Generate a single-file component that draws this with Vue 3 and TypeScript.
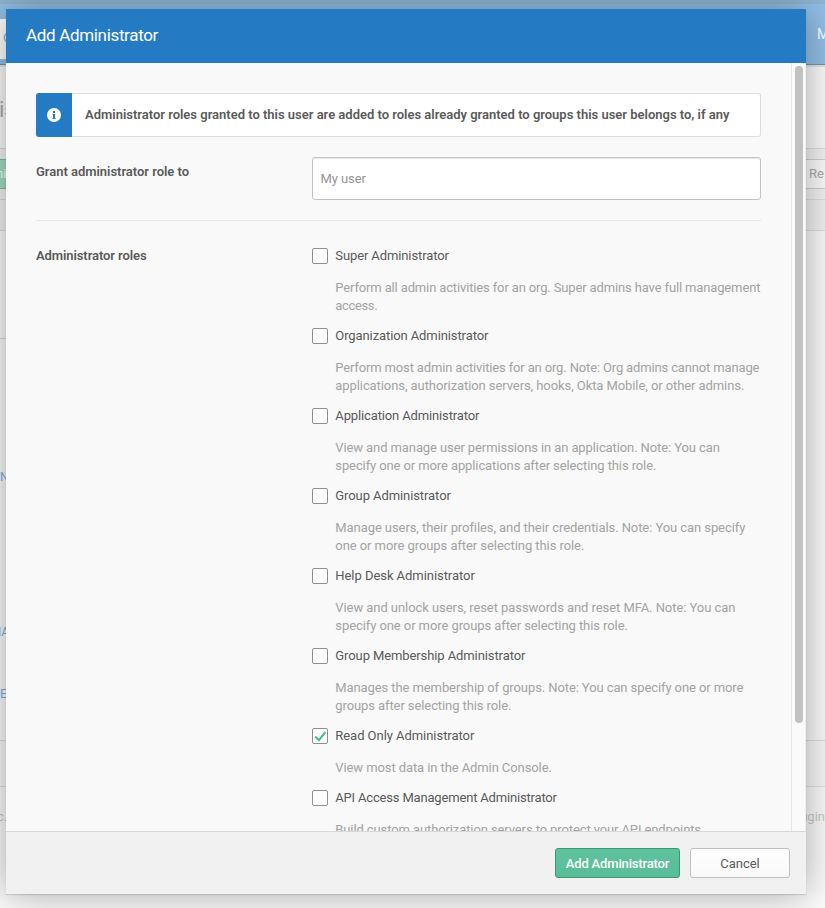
<script setup lang="ts">
interface Line {
  text: string
  width: number
}
interface Role {
  name: Line
  description: Line[]
  checked?: boolean
}

const line = (text: string, width: number): Line => ({ text, width })

const roles: Role[] = [
  {
    name: line('Super Administrator', 113.5),
    description: [
      line('Perform all admin activities for an org. Super admins have full management', 425),
      line('access.', 42),
    ],
  },
  {
    name: line('Organization Administrator', 153),
    description: [
      line('Perform most admin activities for an org. Note: Org admins cannot manage', 424),
      line('applications, authorization servers, hooks, Okta Mobile, or other admins.', 409),
    ],
  },
  {
    name: line('Application Administrator', 144),
    description: [
      line('View and manage user permissions in an application. Note: You can', 384.5),
      line('specify one or more applications after selecting this role.', 321),
    ],
  },
  {
    name: line('Group Administrator', 115.5),
    description: [
      line('Manage users, their profiles, and their credentials. Note: You can specify', 409.5),
      line('one or more groups after selecting this role.', 249),
    ],
  },
  {
    name: line('Help Desk Administrator', 139.5),
    description: [
      line('View and unlock users, reset passwords and reset MFA. Note: You can', 400),
      line('specify one or more groups after selecting this role.', 292.5),
    ],
  },
  {
    name: line('Group Membership Administrator', 190),
    description: [
      line('Manages the membership of groups. Note: You can specify one or more', 408),
      line('groups after selecting this role.', 176),
    ],
  },
  {
    name: line('Read Only Administrator', 139),
    description: [line('View most data in the Admin Console.', 216.5)],
    checked: true,
  },
  {
    name: line('API Access Management Administrator', 221.5),
    description: [line('Build custom authorization servers to protect your API endpoints.', 369)],
  },
]

// Tracks a single line of text so that it spans the given width.
const vFit = {
  mounted(el: HTMLElement, binding: { value: number }) {
    const count = (el.textContent ?? '').length
    const natural = el.getBoundingClientRect().width
    el.style.letterSpacing = `${((binding.value - natural) / count).toFixed(4)}px`
  },
}
</script>

<template>
  <div class="screen">
    <div class="page">
      <div class="page-strip"></div>
      <div class="page-nav">
        <div class="nav-tab">O</div>
        <div class="nav-user">M</div>
      </div>
      <div class="page-title"><span>is</span></div>
      <div class="page-tools">
        <span class="tool-add">ni</span>
        <span class="tool-report">Re</span>
      </div>
      <div class="page-thead"></div>
      <div class="page-table">
        <div class="table-rule"></div>
        <span class="link link-n">N</span>
        <span class="link link-a">IA</span>
        <span class="link link-e">E</span>
      </div>
      <div class="page-gap"></div>
      <div class="page-foot"><span class="foot-left">c.</span><span>ugin</span></div>
    </div>

    <section class="modal">
      <header class="modal-head"><span v-fit="132">Add Administrator</span></header>
      <div class="modal-body">
        <div class="content">
          <div class="banner">
            <div class="banner-icon">
              <svg width="14" height="14" viewBox="0 0 14 14">
                <circle cx="7" cy="7" r="7" fill="#fff" />
                <path d="M6 3h2v2H6zM5.5 6H8v4h.6v1H5.5v-1H6V7h-.5z" fill="#257bc3" />
              </svg>
            </div>
            <div class="banner-text">
              <span v-fit="644.5">Administrator roles granted to this user are added to roles already granted to groups this user belongs to, if any</span>
            </div>
          </div>
          <div class="row row-user">
            <div class="label"><span v-fit="153">Grant administrator role to</span></div>
            <div class="input"><span v-fit="45.5">My user</span></div>
          </div>
          <div class="row row-roles">
            <div class="label"><span v-fit="110.5">Administrator roles</span></div>
            <div class="roles">
              <div v-for="role in roles" :key="role.name.text" class="role">
                <div class="role-head">
                  <span class="box">
                    <svg v-if="role.checked" width="14" height="14" viewBox="0 0 14 14">
                      <path d="M2.2 7.6L5.9 11.2L12.3 3.2" fill="none" stroke="#4cb892" stroke-width="2.1" />
                    </svg>
                  </span>
                  <span v-fit="role.name.width">{{ role.name.text }}</span>
                </div>
                <div class="role-desc">
                  <div v-for="l in role.description" :key="l.text">
                    <span v-fit="l.width">{{ l.text }}</span>
                  </div>
                </div>
              </div>
            </div>
          </div>
        </div>
        <div class="scroll-track"><div class="scroll-thumb"></div></div>
      </div>
      <footer class="modal-foot">
        <button class="btn primary"><span v-fit="103.5">Add Administrator</span></button>
        <button class="btn"><span v-fit="39.5">Cancel</span></button>
      </footer>
    </section>
  </div>
</template>

<style>
body {
  overflow: hidden;
}
</style>

<style scoped>
* {
  box-sizing: border-box;
}
span {
  white-space: nowrap;
}
.screen {
  position: relative;
  width: 825px;
  height: 908px;
  overflow: hidden;
  background: #fbfbfb;
  font-family: Roboto, "Liberation Sans", sans-serif;
  font-size: 13px;
  color: #5a5a5a;
}
.page {
  display: flex;
  flex-direction: column;
  height: 908px;
}
.page-strip {
  height: 4px;
  background: #8fb5d0;
}
.page-nav {
  display: flex;
  justify-content: space-between;
  align-items: flex-start;
  height: 61px;
  padding-top: 15px;
  background: #92bfe7;
  border-bottom: 1px solid #7295b4;
}
.nav-tab {
  width: 60px;
  height: 40px;
  padding-left: 3px;
  background: #fff;
  color: #7fb0d8;
  line-height: 38px;
}
.nav-user {
  width: 8px;
  color: #fff;
  font-size: 14px;
  line-height: 30px;
}
.page-title {
  height: 84px;
  padding-top: 27px;
  background: #fafafa;
  border-top: 2px solid #e4e4e4;
  border-bottom: 1px solid #dedede;
  color: #aaa;
  font-size: 22px;
  line-height: 32px;
}
.page-title span {
  margin-left: -1px;
}
.page-tools {
  display: flex;
  justify-content: space-between;
  height: 51px;
  padding-top: 10px;
  background: #f3f3f3;
  border-bottom: 1px solid #dedede;
}
.tool-add {
  width: 40px;
  height: 30px;
  margin-left: -5px;
  border: 1px solid #83b7a2;
  background: #a3dcc5;
  color: #fff;
  line-height: 28px;
}
.tool-report {
  width: 40px;
  height: 30px;
  margin-right: -12px;
  padding-left: 11px;
  border: 1px solid #d0d0d0;
  background: #fcfcfc;
  color: #aaa;
  line-height: 28px;
}
.page-thead {
  height: 31px;
  background: #f1f1f1;
  border-bottom: 1px solid #dedede;
}
.page-table {
  position: relative;
  height: 510px;
  background: #fafafa;
  border-bottom: 1px solid #dcdcdc;
}
.table-rule {
  width: 100px;
  height: 108px;
  border-bottom: 1px solid #dadada;
}
.link {
  position: absolute;
  color: #79aedb;
  font-size: 12px;
  line-height: 14px;
}
.link-n {
  top: 239px;
  left: 0;
}
.link-a {
  top: 394px;
  left: -2px;
}
.link-e {
  top: 456px;
  left: 0;
}
.page-gap {
  height: 46px;
  background: #f8f8f8;
  border-bottom: 1px solid #e0e0e0;
}
.page-foot {
  display: flex;
  justify-content: space-between;
  padding-top: 22px;
  line-height: 16px;
  color: #c9c9c9;
}
.foot-left {
  margin-left: -3px;
}
.modal {
  position: absolute;
  top: 9px;
  left: 6px;
  display: flex;
  flex-direction: column;
  width: 800px;
  height: 885px;
  background: #f9f9f9;
  box-shadow: 0 0 36px rgba(0, 0, 0, 0.34), 0 1px 1px rgba(0, 0, 0, 0.12);
}
.modal-head {
  flex: none;
  height: 54px;
  padding-left: 20px;
  background: #257bc3;
  color: #fff;
  font-size: 17px;
  line-height: 53px;
}
.modal-body {
  display: flex;
  justify-content: space-between;
  height: 768px;
  overflow: hidden;
}
.content {
  width: 725px;
  margin-left: 30px;
  padding-top: 30px;
}
.banner {
  display: flex;
  height: 44px;
  border: 1px solid #ddd;
  border-left: 0;
  border-radius: 3px;
  background: #fff;
}
.banner-icon {
  display: flex;
  align-items: center;
  justify-content: center;
  width: 36px;
  height: 44px;
  margin-top: -1px;
  border-radius: 3px 0 0 3px;
  background: #257bc3;
}
.banner-text {
  padding-left: 13px;
  font-weight: 600;
  line-height: 42px;
}
.row {
  display: flex;
  justify-content: space-between;
}
.row-user {
  height: 84px;
  padding-top: 20px;
  border-bottom: 1px solid #e6e6e6;
}
.label {
  font-weight: 600;
  line-height: 30px;
}
.input {
  width: 449px;
  height: 43px;
  padding-left: 7.4px;
  border: 1px solid #c2c2c2;
  border-radius: 3px;
  background: #fff;
  box-shadow: inset 0 1px 1px #e8e8e8;
  color: #949494;
  line-height: 42px;
}
.row-roles {
  padding-top: 26px;
}
.row-roles .label {
  line-height: 18px;
}
.roles {
  width: 449px;
}
.role {
  margin-bottom: 12px;
}
.role-head {
  display: flex;
  gap: 7.3px;
  height: 18px;
  line-height: 18px;
}
.box {
  width: 16px;
  height: 16px;
  margin-top: 1px;
  border: 1px solid #8f8f8f;
  border-radius: 2px;
  background: #fff;
}
.box svg {
  display: block;
}
.role-desc {
  padding: 14px 0 0 23.3px;
  color: #a3a3a3;
  line-height: 18px;
}
.scroll-track {
  width: 15px;
  padding: 3px 0 0 3px;
  border-left: 1px solid #e6e6e6;
  border-right: 1px solid #eee;
  background: #fafafa;
}
.scroll-thumb {
  width: 8px;
  height: 657px;
  border-radius: 4px;
  background: #c1c1c1;
}
.modal-foot {
  display: flex;
  justify-content: flex-end;
  gap: 10px;
  height: 63px;
  padding: 16px 16px 0 0;
  border-top: 1px solid #d8d8d8;
  background: #f1f1f1;
}
.btn {
  width: 100px;
  height: 30px;
  padding: 1px 0 0;
  border: 1px solid #c0c0c0;
  border-radius: 3px;
  background: linear-gradient(#fff, #f9f9f9);
  color: #5a5a5a;
  font-family: inherit;
  font-size: 13px;
  line-height: 27px;
}
.btn.primary {
  width: 125px;
  border-color: #3d9672;
  background: linear-gradient(#5fc39f, #58bd98);
  color: #fff;
  font-weight: 500;
}
</style>
